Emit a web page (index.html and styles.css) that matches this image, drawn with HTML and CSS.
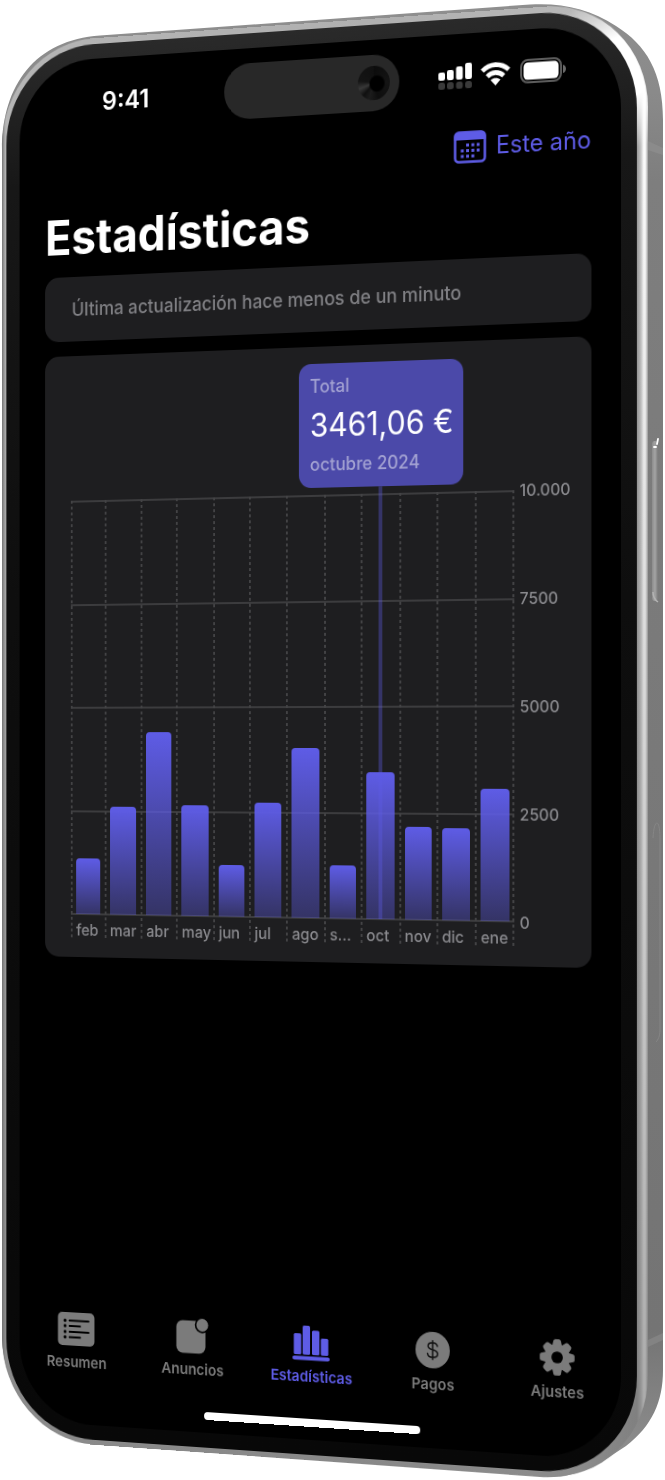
FILE: index.html
```html
<!DOCTYPE html>
<html lang="es">
<head>
<meta charset="utf-8">
<meta name="viewport" content="width=device-width, initial-scale=1">
<title>Estadísticas</title>
<link rel="stylesheet" href="styles.css">
</head>
<body>
<main class="stage">
  <svg class="shell" viewBox="0 0 665 1480" preserveAspectRatio="none" aria-hidden="true">
    <defs>
      <linearGradient id="shellFill" x1="0" y1="0" x2="0" y2="1">
        <stop offset="0" stop-color="#8f8f8f"/>
        <stop offset="0.06" stop-color="#8a8a8a"/>
        <stop offset="0.12" stop-color="#7e7e7e"/>
        <stop offset="0.9" stop-color="#747474"/>
        <stop offset="1" stop-color="#929292"/>
      </linearGradient>
      <linearGradient id="buttonFill" x1="0" y1="0" x2="1" y2="0">
        <stop offset="0" stop-color="#8c8c8c"/>
        <stop offset="0.5" stop-color="#a4a4a4"/>
        <stop offset="1" stop-color="#7a7a7a"/>
      </linearGradient>
    </defs>
    <path fill="url(#shellFill)" d="M2 150C2 84 36 40 100 35.500L530 4.500C562 2.500 590 9 616 26C646 45 663 72 663 120V1370C663 1402 652 1426 626 1446L600 1463C580 1474 560 1478.500 540 1477L100 1445C44 1441 3 1396 2 1335Z"/>
    <path d="M648 141L663 148V155L648 150Z" fill="#8b8b8b"/>
    <path d="M648 1340L663 1333V1340L648 1347Z" fill="#838383"/>
    <rect x="652" y="441" width="6" height="160" rx="3" fill="url(#buttonFill)"/>
    <path d="M654 447H656M658 439L657 444" fill="none" stroke="#fff" stroke-width="1.800" stroke-linecap="round"/>
    <path d="M653 592C653 597 655 600 658 602" stroke="#b4b4b4" stroke-width="1.500" fill="none"/>
    <path d="M653 838C654 818 660 818 660 838V1030C660 1036 658 1040 656 1042" stroke="#868686" fill="none"/>
  </svg>

  <div class="rim">
  <div class="bezel">
  <div class="screen">
    <header class="status">
      <span class="clock">9:41</span>
      <span class="island"><span class="lens"></span></span>
      <span class="indicators">
        <svg width="35" height="26" viewBox="0 0 35 26" aria-hidden="true">
          <g fill="#fff"><rect x="0" y="9" width="7" height="8" rx="2"/><rect x="9" y="7" width="7" height="10" rx="2"/><rect x="18.500" y="4" width="7" height="13" rx="2"/><rect x="28" y="1" width="7" height="16" rx="2"/></g>
          <g fill="#3a3a3a"><rect x="0" y="19" width="7" height="7" rx="2.500"/><rect x="9" y="19" width="7" height="7" rx="2.500"/><rect x="18.500" y="19" width="7" height="7" rx="2.500"/><rect x="28" y="19" width="7" height="7" rx="2.500"/></g>
        </svg>
        <svg width="31" height="23" viewBox="0 0 31 23" aria-hidden="true">
          <g fill="none" stroke="#fff" stroke-width="4.600"><path d="M1.800 8.200C9.500 .8 21.500 .8 29.200 8.200"/><path d="M7 13.800C11.800 9.200 19.200 9.200 24 13.800"/></g>
          <path d="M10.400 17.600C13.300 15 17.700 15 20.600 17.600L15.500 23Z" fill="#fff"/>
        </svg>
        <svg class="battery" width="49" height="24" viewBox="0 0 49 24" aria-hidden="true">
          <rect x="2" y="1" width="41" height="22" rx="7" fill="none" stroke="#5c5c5c" stroke-width="2"/>
          <rect x="4.500" y="3.500" width="36" height="17" rx="4.500" fill="#fff"/>
          <path d="M45 8C49 9 49 15 45 16Z" fill="#6a6a6a"/>
        </svg>
      </span>
    </header>

    <div class="toolbar">
      <button class="period" type="button">
        <svg width="34" height="32" viewBox="0 0 34 32" aria-hidden="true">
          <rect x="1.500" y="1.500" width="31" height="29" rx="4" fill="none" stroke="#5e5ce6" stroke-width="2.600"/>
          <path d="M0.500 9V6Q0.500 0.500 6 0.500H28Q33.500 0.500 33.500 6V9Z" fill="#5e5ce6"/>
          <g fill="#5e5ce6"><rect x="13" y="12.500" width="3" height="3"/><rect x="18.500" y="12.500" width="3" height="3"/><rect x="24" y="12.500" width="3" height="3"/><rect x="7.500" y="18" width="3" height="3"/><rect x="13" y="18" width="3" height="3"/><rect x="18.500" y="18" width="3" height="3"/><rect x="24" y="18" width="3" height="3"/><rect x="7.500" y="23.500" width="3" height="3"/><rect x="13" y="23.500" width="3" height="3"/><rect x="18.500" y="23.500" width="3" height="3"/></g>
        </svg>
        <span>Este año</span>
      </button>
    </div>

    <h1 class="title">Estadísticas</h1>

    <section class="cards">
      <p class="card notice">Última actualización hace menos de un minuto</p>

      <div class="card chart">
        <div class="plot">
          <div class="rules"><i></i><i></i><i></i><i></i><i></i></div>
          <div class="months">
            <div class="month"><div class="slot"><div class="bar" style="height:13.5%"></div></div><span>feb</span></div>
            <div class="month"><div class="slot"><div class="bar" style="height:25.9%"></div></div><span>mar</span></div>
            <div class="month"><div class="slot"><div class="bar" style="height:44%"></div></div><span>abr</span></div>
            <div class="month"><div class="slot"><div class="bar" style="height:26.4%"></div></div><span>may</span></div>
            <div class="month"><div class="slot"><div class="bar" style="height:12.4%"></div></div><span>jun</span></div>
            <div class="month"><div class="slot"><div class="bar" style="height:27.2%"></div></div><span>jul</span></div>
            <div class="month"><div class="slot"><div class="bar" style="height:40.2%"></div></div><span>ago</span></div>
            <div class="month"><div class="slot"><div class="bar" style="height:12.5%"></div></div><span>s…</span></div>
            <div class="month">
              <div class="slot selected"><div class="bar" style="height:34.6%"></div>
                <div class="tooltip"><span class="faint">Total</span><strong>3461,06 €</strong><span class="faint">octubre 2024</span></div>
              </div><span>oct</span>
            </div>
            <div class="month"><div class="slot"><div class="bar" style="height:21.8%"></div></div><span>nov</span></div>
            <div class="month"><div class="slot"><div class="bar" style="height:21.4%"></div></div><span>dic</span></div>
            <div class="month"><div class="slot"><div class="bar" style="height:30.7%"></div></div><span>ene</span></div>
          </div>
        </div>
        <div class="scale"><span>10.000</span><span>7500</span><span>5000</span><span>2500</span><span>0</span></div>
      </div>
    </section>

    <nav class="tabs">
      <a class="tab" href="#resumen">
        <svg width="42" height="36" viewBox="0 0 42 36" aria-hidden="true">
          <rect x="0.500" y="1" width="41" height="34" rx="5" fill="#7b7b7b"/>
          <g stroke="#000" stroke-width="1.800" stroke-linecap="round"><path d="M13.500 9.500H35M13.500 15H25.500M13.500 21H35M13.500 26.500H25.500"/></g>
          <g fill="#000"><circle cx="8.500" cy="9.500" r="1.700"/><circle cx="8.500" cy="15" r="1.700"/><circle cx="8.500" cy="21" r="1.700"/><circle cx="8.500" cy="26.500" r="1.700"/></g>
        </svg>
        <span>Resumen</span>
      </a>
      <a class="tab" href="#anuncios">
        <svg width="36" height="36" viewBox="0 0 36 36" aria-hidden="true">
          <rect x="0.500" y="2.500" width="32" height="33" rx="7" fill="#7b7b7b"/>
          <circle cx="29" cy="6.500" r="8.200" fill="#000"/><circle cx="29" cy="6.500" r="6.500" fill="#7b7b7b"/>
        </svg>
        <span>Anuncios</span>
      </a>
      <a class="tab active" href="#estadisticas" aria-current="page">
        <svg width="40" height="36" viewBox="0 0 40 36" aria-hidden="true">
          <g fill="#5e5ce6"><rect x="1.500" y="9" width="8" height="21" rx="1.500"/><rect x="11" y="1" width="8" height="29" rx="1.500"/><rect x="21" y="5.500" width="8" height="24.500" rx="1.500"/><rect x="30.500" y="13" width="8" height="17" rx="1.500"/><rect x="0" y="31.500" width="40" height="4" rx="2"/></g>
        </svg>
        <span>Estadísticas</span>
      </a>
      <a class="tab" href="#pagos">
        <svg width="36" height="36" viewBox="0 0 36 36" aria-hidden="true">
          <circle cx="18" cy="18" r="18" fill="#7b7b7b"/>
          <path d="M23 14C22.500 11.800 20.700 10.800 18 10.800C15.200 10.800 13.200 12.100 13.200 14.200C13.200 19 23.300 16.300 23.300 21.500C23.300 23.800 21.200 25.200 18 25.200C15 25.200 12.900 24 12.600 21.600M18 8.800V27.200" fill="none" stroke="#111" stroke-width="1.500" stroke-linecap="round"/>
        </svg>
        <span>Pagos</span>
      </a>
      <a class="tab" href="#ajustes">
        <svg width="38" height="38" viewBox="-19 -19 38 38" aria-hidden="true">
          <g fill="#7b7b7b">
            <circle r="13.500"/>
            <path id="tooth" d="M-5.500 -11L-4 -17.200Q-3.500 -18.800 -2 -18.800H2Q3.500 -18.800 4 -17.200L5.500 -11V0H-5.500Z"/>
            <use href="#tooth" transform="rotate(45)"/><use href="#tooth" transform="rotate(90)"/><use href="#tooth" transform="rotate(135)"/><use href="#tooth" transform="rotate(180)"/><use href="#tooth" transform="rotate(225)"/><use href="#tooth" transform="rotate(270)"/><use href="#tooth" transform="rotate(315)"/>
          </g>
          <circle r="6.200" fill="#000"/>
        </svg>
        <span>Ajustes</span>
      </a>
    </nav>
    <div class="home-bar"></div>
  </div>
  </div>
  </div>
</main>
</body>
</html>
```
FILE: styles.css
```css
* { box-sizing: border-box; }

body {
  margin: 0;
  background: #fff;
  color: #fff;
  font-family: Inter, "Liberation Sans", sans-serif;
}

.stage {
  position: relative;
  max-width: 665px;
  margin: 0 auto;
  padding: 23px 0 20px;
  overflow: hidden;
}

.shell {
  position: absolute;
  inset: 0;
  width: 100%;
  height: 100%;
}

/* The handset is turned about its vertical axis. */
.rim {
  width: 104%;
  margin-left: -31px;
  padding: 6px 11px 5px 5px;
  border-radius: 104px;
  background:
    linear-gradient(to bottom, transparent 10%, rgba(110, 110, 110, 0.6)),
    radial-gradient(circle at calc(100% - 24px) 64px, #fff 0 30px, transparent 80px),
    linear-gradient(to right, #777 0, #b5b5b5 4px, #b0b0b0 60%, #b8b8b8 90%, #989898 calc(100% - 11px), #c4c4c4 calc(100% - 7px), #fff calc(100% - 4px), #f4f4f4 calc(100% - 2px), #999 100%);
  transform: perspective(4000px) rotateY(-21.3deg);
  transform-origin: 49.5% 50%;
}

.bezel {
  padding: 15px 16px 15px 15px;
  border-radius: 98px;
  background: linear-gradient(to bottom, #2a2a2a, #171717 10%, #0e0e0e 40%, #080808);
}

.screen {
  display: flex;
  flex-direction: column;
  min-height: 1396px;
  border-radius: 82px;
  background: #000;
}

.status {
  display: grid;
  grid-template-columns: 1fr auto 1fr;
  align-items: center;
  height: 86px;
}

.clock {
  padding-left: 93px;
  font-size: 26px;
  font-weight: 600;
}

.island {
  display: flex;
  align-items: center;
  justify-content: flex-end;
  width: 188px;
  height: 56px;
  padding-right: 10px;
  border-radius: 28px;
  background: #282828;
}

.lens {
  width: 34px;
  height: 34px;
  border-radius: 50%;
  background:
    radial-gradient(circle at 60% 52%, #000 0 7px, transparent 9px),
    conic-gradient(from 0deg, #0c0c0c, #141414 25%, #0e0e0e 45%, #1c1c1c 55%, #101010 62%, #383838 70%, #141414 78%, #101010);
}

.indicators {
  display: flex;
  align-items: center;
  gap: 9px;
  padding: 0 0 4px 41px;
}

.toolbar {
  display: flex;
  justify-content: flex-end;
  align-items: center;
  height: 52px;
  padding: 0 30px 0 29px;
}

.period {
  display: flex;
  align-items: center;
  gap: 10px;
  padding: 0;
  border: 0;
  background: none;
  color: #5e5ce6;
  font: 400 24px/32px Inter, "Liberation Sans", sans-serif;
}

.title {
  margin: 14px 29px 10px;
  font-size: 49px;
  line-height: 60px;
  font-weight: 700;
}

.cards {
  display: grid;
  gap: 15px;
  padding: 0 30px 0 29px;
}

.card {
  margin: 0;
  border-radius: 15px;
  background: #1e1e20;
}

.notice {
  padding: 21px 30px 19px;
  color: #808084;
  font-size: 19px;
  line-height: 26px;
  font-weight: 500;
}

.chart {
  display: grid;
  grid-template-columns: 1fr 79px;
  padding: 148px 0 20px 29px;
  color: #8a8a8e;
  font-size: 16px;
  font-weight: 500;
}

.plot { position: relative; }

.rules {
  position: absolute;
  inset: 0 0 auto;
  display: flex;
  flex-direction: column;
  justify-content: space-between;
  height: 424px;
}

.rules i {
  height: 2px;
  background: #3c3c3e;
}

/* Column widths follow the number of days in each month. */
.months {
  position: relative;
  display: grid;
  grid-template-columns: 29fr 31fr 30fr 31fr 30fr 31fr 31fr 30fr 31fr 30fr 31fr 31fr;
}

.month {
  min-width: 0;
  padding: 0 5px 0 6px;
  background: repeating-linear-gradient(to bottom, #434345 0 3px, transparent 3px 6px) left / 2px 100% no-repeat;
}

.month:last-child {
  background:
    repeating-linear-gradient(to bottom, #434345 0 3px, transparent 3px 6px) left / 2px 100% no-repeat,
    repeating-linear-gradient(to bottom, #434345 0 3px, transparent 3px 6px) right / 2px 100% no-repeat;
}

.month > span {
  display: block;
  padding-top: 6px;
  line-height: 20px;
  height: 24px;
  white-space: nowrap;
}

.slot {
  position: relative;
  display: flex;
  align-items: flex-end;
  height: 423px;
}

.selected::after {
  content: "";
  position: absolute;
  top: -7px;
  bottom: 0;
  left: calc(50% - 2px);
  width: 4px;
  background: rgba(94, 92, 230, 0.36);
}

.bar {
  width: 100%;
  border-radius: 4px 4px 0 0;
  background: linear-gradient(to bottom, #5e5ce6, rgba(94, 92, 230, 0.35));
}

.tooltip {
  position: absolute;
  bottom: calc(100% + 7px);
  left: 50%;
  display: flex;
  flex-direction: column;
  width: 174px;
  margin-left: -87px;
  padding: 12px;
  border-radius: 13px;
  background: #4b49a9;
  color: #fff;
  white-space: nowrap;
}

.tooltip strong {
  margin: 8px 0;
  font-size: 32px;
  line-height: 40px;
  font-weight: 400;
}

.faint {
  color: #a3a2d2;
  font-size: 18px;
  line-height: 22px;
}

.scale {
  display: flex;
  flex-direction: column;
  justify-content: space-between;
  height: 444px;
  margin-top: -10px;
  padding-left: 6px;
  line-height: 20px;
}

.tabs {
  display: grid;
  grid-template-columns: repeat(5, 1fr);
  margin-top: auto;
}

.tab {
  display: flex;
  flex-direction: column;
  align-items: center;
  color: #7b7b7b;
  font-size: 15px;
  font-weight: 600;
  line-height: 20px;
  text-decoration: none;
}

.tab svg { height: 36px; }

.tab span { margin-top: 6px; }

.active { color: #5e5ce6; }

.home-bar {
  width: 232px;
  height: 8px;
  margin: 32px auto 13px;
  border-radius: 4px;
  background: #fff;
}
```
